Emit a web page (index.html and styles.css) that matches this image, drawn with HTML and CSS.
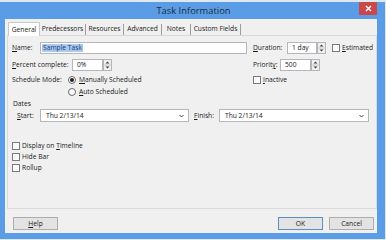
FILE: index.html
```html
<!DOCTYPE html>
<html>
<head>
<meta charset="utf-8">
<link rel="stylesheet" href="styles.css">
</head>
<body>
<div class="window">
  <div class="titlebar">
    <span class="title">Task Information</span>
    <span class="close"><svg width="7" height="7" viewBox="0 0 7 7"><path d="M1 1L6 6M6 1L1 6" stroke="#fff" stroke-width="1.4"/></svg></span>
  </div>
  <div class="client">
    <div class="tabs">
      <span class="tab active w-gen">General</span>
      <span class="tab w-pre">Predecessors</span>
      <span class="tab w-res">Resources</span>
      <span class="tab w-adv">Advanced</span>
      <span class="tab w-not">Notes</span>
      <span class="tab w-cus">Custom Fields</span>
    </div>
    <div class="panel">
      <div class="row r1">
        <div class="lcol">
          <span class="lbl w-name"><u>N</u>ame:</span>
          <span class="field f-name"><span class="hl">Sample Task</span></span>
        </div>
        <div class="rcol">
          <span class="lbl w-dur"><u>D</u>uration:</span>
          <span class="field f-dur">1 day</span>
          <span class="spin"><svg width="9" height="12" viewBox="0 0 9 12"><rect x="0.5" y="0.5" width="8" height="11" fill="#f0f0f0" stroke="#b5b5b5"/><line x1="1" y1="6" x2="8" y2="6" stroke="#c8c8c8"/><path d="M2.5 4.5L4.5 2.5L6.5 4.5Z" fill="#404040"/><path d="M2.5 7.5L4.5 9.5L6.5 7.5Z" fill="#404040"/></svg></span>
          <span class="check c-est"></span><span class="txt"><u>E</u>stimated</span>
        </div>
      </div>
      <div class="row r2">
        <div class="lcol">
          <span class="lbl w-pct"><u>P</u>ercent complete:</span>
          <span class="field f-pct">0%</span>
          <span class="spin"><svg width="9" height="12" viewBox="0 0 9 12"><rect x="0.5" y="0.5" width="8" height="11" fill="#f0f0f0" stroke="#b5b5b5"/><line x1="1" y1="6" x2="8" y2="6" stroke="#c8c8c8"/><path d="M2.5 4.5L4.5 2.5L6.5 4.5Z" fill="#404040"/><path d="M2.5 7.5L4.5 9.5L6.5 7.5Z" fill="#404040"/></svg></span>
        </div>
        <div class="rcol">
          <span class="lbl w-pri">Priorit<u>y</u>:</span>
          <span class="field f-pri">500</span>
          <span class="spin"><svg width="9" height="12" viewBox="0 0 9 12"><rect x="0.5" y="0.5" width="8" height="11" fill="#f0f0f0" stroke="#b5b5b5"/><line x1="1" y1="6" x2="8" y2="6" stroke="#c8c8c8"/><path d="M2.5 4.5L4.5 2.5L6.5 4.5Z" fill="#404040"/><path d="M2.5 7.5L4.5 9.5L6.5 7.5Z" fill="#404040"/></svg></span>
        </div>
      </div>
      <div class="row r3">
        <div class="lcol">
          <span class="lbl w-sch">Schedule Mode:</span>
          <span class="radio on"></span><span class="txt"><u>M</u>anually Scheduled</span>
        </div>
        <div class="rcol">
          <span class="check"></span><span class="txt"><u>I</u>nactive</span>
        </div>
      </div>
      <div class="row r4">
        <span class="radio"></span><span class="txt"><u>A</u>uto Scheduled</span>
      </div>
      <div class="row r5">
        <span class="txt dates">Dates</span>
      </div>
      <div class="row r6">
        <span class="lbl w-start"><u>S</u>tart:</span>
        <span class="field select s-start">Thu 2/13/14<svg class="chev" width="5" height="4" viewBox="0 0 5 4"><path d="M0.5 1L2.5 3L4.5 1" fill="none" stroke="#444" stroke-width="1"/></svg></span>
        <span class="lbl w-fin"><u>F</u>inish:</span>
        <span class="field select s-fin">Thu 2/13/14<svg class="chev" width="5" height="4" viewBox="0 0 5 4"><path d="M0.5 1L2.5 3L4.5 1" fill="none" stroke="#444" stroke-width="1"/></svg></span>
      </div>
      <div class="checks">
        <div class="crow"><span class="check"></span><span class="txt">Display on <u>T</u>imeline</span></div>
        <div class="crow"><span class="check"></span><span class="txt">Hide Bar</span></div>
        <div class="crow"><span class="check"></span><span class="txt">Rollup</span></div>
      </div>
    </div>
    <div class="buttons">
      <span class="btn"><u>H</u>elp</span>
      <span class="spacer"></span>
      <span class="btn default">OK</span>
      <span class="btn">Cancel</span>
    </div>
  </div>
</div>
</body>
</html>
```

FILE: styles.css
```css
html, body {
  margin: 0;
  padding: 0;
}
body {
  width: 386px;
  height: 240px;
  background: #dfe7f1;
  padding-top: 2px;
  box-sizing: border-box;
  font-family: "Open Sans", "Noto Sans", sans-serif;
  font-size: 6.7px;
  color: #1a1a1a;
  overflow: hidden;
}
.window {
  width: 385px;
  height: 237px;
  background: #5a9de6;
  display: flex;
  flex-direction: column;
}
.titlebar {
  height: 17px;
  position: relative;
  display: flex;
  align-items: center;
  justify-content: center;
}
.title {
  font-size: 9.4px;
  line-height: 12px;
  color: #1f2a3a;
  margin-left: 2px;
}
.close {
  position: absolute;
  left: 359px;
  top: 0;
  width: 18px;
  height: 13px;
  background: #c9494a;
  display: flex;
  align-items: center;
  justify-content: center;
}
.client {
  margin-left: 5px;
  width: 372px;
  height: 214px;
  background: #f0f0f0;
  display: flex;
  flex-direction: column;
}
.tabs {
  display: flex;
  margin-top: 2px;
  margin-left: 3px;
  height: 14px;
  align-items: flex-end;
}
.tab {
  box-sizing: border-box;
  height: 11px;
  line-height: 10px;
  text-align: center;
  border-right: 1px solid #9c9c9c;
  white-space: nowrap;
}
.tab.active {
  height: 14px;
  line-height: 13px;
  background: #ffffff;
  border: 1px solid #c9c9c9;
  border-bottom: none;
  position: relative;
  top: 1px;
}
.w-gen { width: 32px; }
.w-pre { width: 46px; }
.w-res { width: 38px; }
.w-adv { width: 38px; }
.w-not { width: 29px; }
.w-cus { width: 50px; }
.panel {
  box-sizing: border-box;
  margin-left: 2px;
  width: 370px;
  height: 174px;
  border: 1px solid #dadada;
  padding-left: 4px;
  padding-top: 6px;
}
.row {
  display: flex;
  align-items: center;
}
.lcol {
  width: 241px;
  display: flex;
  align-items: center;
}
.rcol {
  display: flex;
  align-items: center;
}
.r1 { height: 12px; }
.r2 { height: 12px; margin-top: 5px; }
.r3 { height: 11px; margin-top: 3px; }
.r4 { height: 11px; margin-top: 1px; padding-left: 56px; }
.r5 { height: 11px; margin-top: 1px; }
.r6 { height: 13px; margin-top: 0px; }
.lbl {
  line-height: 10px;
  white-space: nowrap;
}
.txt {
  line-height: 10px;
  white-space: nowrap;
}
.w-name { width: 28px; }
.w-dur { width: 34px; }
.w-pct { width: 60px; }
.w-pri { width: 27px; }
.w-sch { width: 56px; }
.w-start { width: 23px; margin-left: 5px; }
.w-fin { width: 25px; margin-left: 5px; }
.dates { margin-left: 1px; }
.field {
  box-sizing: border-box;
  height: 12px;
  background: #ffffff;
  border: 1px solid #b4b6bc;
  line-height: 10px;
  padding-left: 3px;
  display: flex;
  align-items: center;
  white-space: nowrap;
}
.f-name { width: 207px; padding-left: 1px; }
.hl {
  background: #a9c9ef;
  color: #1b3a72;
  padding: 0 1px;
  line-height: 8px;
}
.f-dur { width: 30px; padding-left: 4px; }
.f-pct { width: 31px; padding-left: 4px; }
.f-pri { width: 31px; padding-left: 4px; }
.spin {
  width: 9px;
  height: 12px;
  display: block;
}
.spin svg { display: block; }
.check {
  box-sizing: border-box;
  width: 8px;
  height: 8px;
  border: 1px solid #7a7a7a;
  background: #fbfbfb;
  margin-right: 2px;
  flex: none;
}
.c-est { margin-left: 6px; }
.radio {
  box-sizing: border-box;
  width: 8px;
  height: 8px;
  border-radius: 50%;
  border: 1px solid #6a6a6a;
  background: #fbfbfb;
  margin-right: 3px;
  display: flex;
  align-items: center;
  justify-content: center;
}
.radio.on::after {
  content: "";
  width: 4px;
  height: 4px;
  border-radius: 50%;
  background: #222;
}
.select {
  height: 13px;
  justify-content: space-between;
  padding-right: 4px;
  padding-left: 5px;
}
.s-start { width: 149px; }
.s-fin { width: 150px; }
.chev { display: block; }
.checks {
  margin-top: 18px;
  display: flex;
  flex-direction: column;
}
.crow {
  height: 11px;
  display: flex;
  align-items: center;
}
.buttons {
  display: flex;
  margin-top: 8px;
  padding-left: 8px;
  padding-right: 3px;
  gap: 6px;
}
.spacer { flex: 1; }
.btn {
  box-sizing: border-box;
  width: 45px;
  height: 13px;
  border: 1px solid #adadad;
  background: #e3e3e3;
  text-align: center;
  line-height: 11px;
}
.btn.default {
  border-color: #5a8fc4;
}
```
